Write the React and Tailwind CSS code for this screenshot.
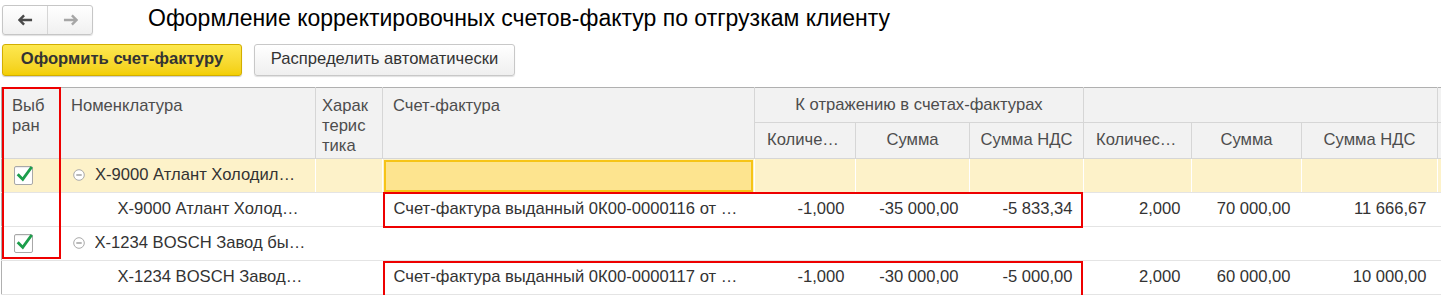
import React from 'react';

const cols = [59, 255, 67, 372, 101, 114, 114, 108, 110, 136, 40];

function Check() {
    return (
        <div className="relative w-[19px] h-[19px] border border-[#a8a8a8] bg-white rounded-[2px] shadow-[inset_0_1px_1px_rgba(0,0,0,0.08)]">
            <svg viewBox="0 0 20 20" className="absolute left-[1px] -top-[3px] w-[18px] h-[20px]">
                <path d="M3 11.5 L7.5 16 L16.5 3.5" fill="none" stroke="#1c9e4b" strokeWidth="3.2" strokeLinecap="square" />
            </svg>
        </div>
    );
}

function Minus() {
    return (
        <svg viewBox="0 0 12 12" className="w-[12px] h-[12px] shrink-0">
            <circle cx="6" cy="6" r="5.3" fill="#fff" stroke="#a9a9a9" strokeWidth="1" />
            <path d="M3.3 6 H8.7" stroke="#8a8a8a" strokeWidth="1.2" />
        </svg>
    );
}

const th = 'bg-[#f2f2f2] border-r border-b border-[#d6d6d6] text-[#4d4d4d] font-normal';

export default function App() {
    const rows = [
        { group: true, checked: true, name: 'X-9000 Атлант Холодил…' },
        { name: 'X-9000 Атлант Холод…', invoice: 'Счет-фактура выданный 0К00-0000116 от …', q: '-1,000', s: '-35 000,00', n: '-5 833,34', q2: '2,000', s2: '70 000,00', n2: '11 666,67' },
        { group: true, checked: true, name: 'X-1234 BOSCH Завод бы…' },
        { name: 'X-1234 BOSCH Завод…', invoice: 'Счет-фактура выданный 0К00-0000117 от …', q: '-1,000', s: '-30 000,00', n: '-5 000,00', q2: '2,000', s2: '60 000,00', n2: '10 000,00' },
    ];

    return (
        <div className="w-[1441px] h-[295px] overflow-hidden bg-white text-[#333] font-['Liberation_Sans',Arial,sans-serif] text-[16.6px]">
            {/* Top bar */}
            <div className="flex items-center h-[36px] pt-[3px]">
                <div className="ml-[2px] flex h-[30px] w-[91px] border border-[#c6c6c6] rounded-[3px] bg-gradient-to-b from-white to-[#f0f0f0] shadow-[0_1px_1px_rgba(0,0,0,0.12)]">
                    <div className="flex-1 flex items-center justify-center border-r border-[#d6d6d6]">
                        <svg viewBox="0 0 16 12" className="w-[15px] h-[12px]">
                            <path d="M1 6 H15 M6.5 1 L1.5 6 L6.5 11" fill="none" stroke="#4a4a4a" strokeWidth="2.6" />
                        </svg>
                    </div>
                    <div className="flex-1 flex items-center justify-center">
                        <svg viewBox="0 0 16 12" className="w-[15px] h-[12px]">
                            <path d="M1 6 H15 M9.5 1 L14.5 6 L9.5 11" fill="none" stroke="#a6a6a6" strokeWidth="2.6" />
                        </svg>
                    </div>
                </div>
                <h1 className="ml-[55px] -mt-[3px] text-[23px] text-black font-normal">
                    Оформление корректировочных счетов-фактур по отгрузкам клиенту
                </h1>
            </div>

            {/* Buttons */}
            <div className="flex items-center gap-[12px] mt-[7px] ml-[2px] h-[33px]">
                <button className="h-[32px] w-[240px] rounded-[3px] border border-[#d2ae00] bg-gradient-to-b from-[#fde84f] to-[#f3cf00] text-[#333] font-bold text-[16.6px] shadow-[0_1px_1px_rgba(0,0,0,0.2)]">
                    Оформить счет-фактуру
                </button>
                <button className="h-[32px] w-[261px] rounded-[3px] border border-[#c8c8c8] bg-gradient-to-b from-white to-[#efefef] text-[#333] text-[16.6px] shadow-[0_1px_1px_rgba(0,0,0,0.12)]">
                    Распределить автоматически
                </button>
            </div>

            {/* Table */}
            <div className="relative mt-[11px] ml-[1px]">
                <table className="table-fixed border-collapse border-t border-l border-[#b0b0b0]" style={{ width: cols.reduce((a, b) => a + b, 0) }}>
                    <colgroup>
                        {cols.map((w, i) => (
                            <col key={i} style={{ width: w }} />
                        ))}
                    </colgroup>
                    <thead>
                        <tr className="h-[35px]">
                            <th rowSpan={2} className={`${th} align-top text-left pl-[10px] pt-[8px] leading-[20px]`}>Выб ран</th>
                            <th rowSpan={2} className={`${th} align-top text-left pl-[10px] pt-[8px] leading-[20px]`}>Номенклатура</th>
                            <th rowSpan={2} className={`${th} align-top text-left pl-[6px] pr-0 pt-[8px] leading-[20px]`}>Харак терис тика</th>
                            <th rowSpan={2} className={`${th} align-top text-left pl-[10px] pt-[8px] leading-[20px]`}>Счет-фактура</th>
                            <th colSpan={3} className={`${th} text-center`}>К отражению в счетах-фактурах</th>
                            <th colSpan={3} className={th}></th>
                            <th className={th}></th>
                        </tr>
                        <tr className="h-[36px]">
                            <th className={`${th} px-[12px] truncate`}>Количество</th>
                            <th className={`${th} px-[10px]`}>Сумма</th>
                            <th className={`${th} px-[10px]`}>Сумма НДС</th>
                            <th className={`${th} px-[12px] truncate`}>Количество</th>
                            <th className={`${th} px-[10px]`}>Сумма</th>
                            <th className={`${th} px-[10px]`}>Сумма НДС</th>
                            <th className={th}></th>
                        </tr>
                    </thead>
                    <tbody>
                        {rows.map((r, i) => {
                            const yellow = i === 0;
                            const cell = `border-b border-[#e4e4e4] ${yellow ? 'bg-[#fdf2c9] border-r border-r-white' : ''}`;
                            return (
                                <tr key={i} className="h-[34px]">
                                    <td className={`${cell} pl-[12px]`}>{r.checked && <Check />}</td>
                                    <td className={cell}>
                                        {r.group ? (
                                            <div className="flex items-center pl-[12px] gap-[10px] pr-[10px]">
                                                <Minus />
                                                <span className="truncate">{r.name}</span>
                                            </div>
                                        ) : (
                                            <div className="pl-[57px] pr-[10px] truncate">{r.name}</div>
                                        )}
                                    </td>
                                    <td className={cell}></td>
                                    <td className={`${cell} p-0`}>
                                        {yellow ? (
                                            <div className="mx-[1px] h-[32px] bg-[#fde48f] border-2 border-[#f6c417]"></div>
                                        ) : (
                                            <div className="pl-[11px] truncate">{r.invoice}</div>
                                        )}
                                    </td>
                                    <td className={`${cell} text-right pr-[11px]`}>{r.q}</td>
                                    <td className={`${cell} text-right pr-[11px]`}>{r.s}</td>
                                    <td className={`${cell} text-right pr-[11px]`}>{r.n}</td>
                                    <td className={`${cell} text-right pr-[11px]`}>{r.q2}</td>
                                    <td className={`${cell} text-right pr-[11px]`}>{r.s2}</td>
                                    <td className={`${cell} text-right pr-[11px]`}>{r.n2}</td>
                                    <td className={cell}></td>
                                </tr>
                            );
                        })}
                    </tbody>
                </table>

                {/* red annotation frames */}
                <div className="absolute left-[1px] top-0 w-[59px] h-[172px] border-2 border-[#ee0000] pointer-events-none" />
                <div className="absolute left-[382px] top-[105px] w-[700px] h-[36px] border-2 border-[#ee0000] pointer-events-none" />
                <div className="absolute left-[382px] top-[174px] w-[700px] h-[36px] border-2 border-[#ee0000] pointer-events-none" />
            </div>
        </div>
    );
}
